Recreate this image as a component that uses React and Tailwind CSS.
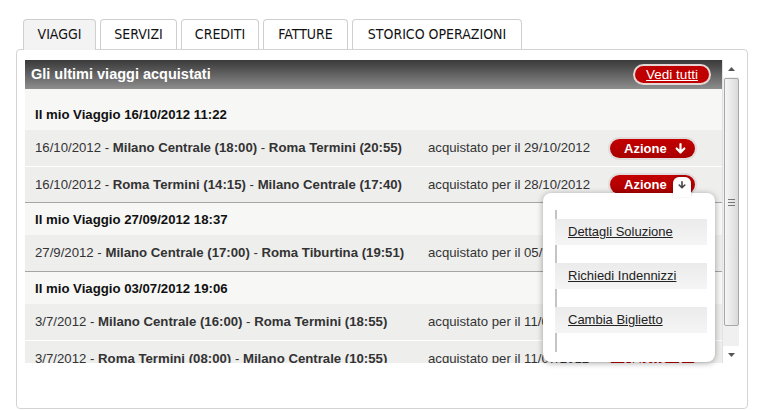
import React from "react";

const groups = [
  {
    title: "Il mio Viaggio 16/10/2012 11:22",
    rows: [
      ["16/10/2012", "Milano Centrale (18:00)", "Roma Termini (20:55)", "29/10/2012"],
      ["16/10/2012", "Roma Termini (14:15)", "Milano Centrale (17:40)", "28/10/2012"],
    ],
  },
  {
    title: "Il mio Viaggio 27/09/2012 18:37",
    rows: [["27/9/2012", "Milano Centrale (17:00)", "Roma Tiburtina (19:51)", "05/10/2012"]],
  },
  {
    title: "Il mio Viaggio 03/07/2012 19:06",
    rows: [
      ["3/7/2012", "Milano Centrale (16:00)", "Roma Termini (18:55)", "11/07/2012"],
      ["3/7/2012", "Roma Termini (08:00)", "Milano Centrale (10:55)", "11/07/2012"],
    ],
  },
];

const tabs = [
  { label: "VIAGGI", w: "w-[73px]", active: true },
  { label: "SERVIZI", w: "w-[77px]" },
  { label: "CREDITI", w: "w-[78px]" },
  { label: "FATTURE", w: "w-[85px]" },
  { label: "STORICO OPERAZIONI", w: "w-[170px]" },
];

function DownArrow({ color = "#fff", size = 11, sw = 2 }) {
  return (
    <svg width={size} height={size} viewBox="0 0 10 10">
      <path d="M5 1 V8.5 M1.5 5 L5 8.5 L8.5 5" stroke={color} strokeWidth={sw} fill="none" strokeLinecap="round" strokeLinejoin="round" />
    </svg>
  );
}

function Azione() {
  return (
    <div className="w-[89px] h-[23px] rounded-full bg-[#e2dcdc] p-[2px] shrink-0">
      <div className="w-full h-full rounded-full bg-gradient-to-b from-[#c40000] to-[#a80000] flex items-center pl-[14px] pr-[9px] justify-between">
        <span className="text-white font-bold text-[13px] leading-none">Azione</span>
        <DownArrow />
      </div>
    </div>
  );
}

function Row({ r, first }) {
  return (
    <div className={`flex items-center h-[36px] bg-[#eeeeed] pl-[10px] text-[13.2px] text-[#333] ${first ? "" : "border-t border-white"}`}>
      <div className="w-[393px] shrink-0 whitespace-nowrap">
        {r[0]} - <b className="font-bold">{r[1]}</b> - <b className="font-bold">{r[2]}</b>
      </div>
      <div className="w-[180px] shrink-0 whitespace-nowrap">acquistato per il {r[3]}</div>
      <Azione />
    </div>
  );
}

export default function App() {
  return (
    <div className="w-[762px] h-[410px] bg-white relative overflow-hidden" style={{ fontFamily: '"Liberation Sans", Arial, sans-serif' }}>
      <div className="pt-[19px]">
        <div className="flex gap-[4px] pl-[23px] relative z-10">
          {tabs.map((t) => (
            <div
              key={t.label}
              className={`${t.w} ${t.active ? "h-[31px] bg-[#f3f3f3]" : "h-[30px] bg-white"} border border-b-0 border-[#cfcfcf] rounded-t-[4px] flex items-center justify-center text-[14px] text-[#111] pb-[1px] whitespace-nowrap font-['DejaVu_Sans_Condensed','Liberation_Sans',sans-serif]`}
            >
              {t.label}
            </div>
          ))}
        </div>
        <div className="-mt-[1px] ml-[16px] w-[732px] h-[360px] border border-[#d4d4d4] rounded-[4px] pt-[10px] pl-[8px]">
          <div className="flex h-[303px] w-[714px]">
            <div className="w-[697px] flex flex-col overflow-hidden">
              <div className="h-[29px] shrink-0 bg-gradient-to-b from-[#3a3a3a] to-[#8e8e8e] flex items-center justify-between pl-[6px] pr-[11px]">
                <span className="text-white font-bold text-[14.5px]">Gli ultimi viaggi acquistati</span>
                <div className="w-[78px] h-[21px] rounded-full bg-[#e6d6d6] p-[2px]">
                  <div className="w-full h-full rounded-full bg-[#c00000] flex items-center justify-center">
                    <span className="text-white text-[13.5px] underline leading-none">Vedi tutti</span>
                  </div>
                </div>
              </div>
              <div className="flex-1 bg-[#f7f7f6] overflow-hidden pt-[9px]">
                {groups.map((g, gi) => (
                  <div key={gi} className={gi > 0 ? "border-t border-[#a5a5a5]" : ""}>
                    <div className="h-[32px] flex items-center pl-[10px] pt-[2px] text-[13.2px] font-bold text-[#111]">{g.title}</div>
                    {g.rows.map((r, ri) => (
                      <Row key={ri} r={r} first={ri === 0} />
                    ))}
                  </div>
                ))}
              </div>
            </div>
            <div className="w-[17px] h-[303px] bg-[#f0f0f0] border-l border-[#e2e2e2] flex flex-col items-center">
              <div className="h-[17px] w-full bg-white flex items-center justify-center">
                <svg width="7" height="4" viewBox="0 0 7 4"><path d="M0 4 L3.5 0 L7 4 Z" fill="#555" /></svg>
              </div>
              <div className="mt-[1px] w-[15px] h-[248px] border border-[#a8a8a8] rounded-[2px] bg-gradient-to-r from-[#f6f6f6] to-[#dadada] flex flex-col items-center justify-center gap-[2px]">
                <div className="w-[7px] h-px bg-[#777]" />
                <div className="w-[7px] h-px bg-[#777]" />
                <div className="w-[7px] h-px bg-[#777]" />
              </div>
              <div className="flex-1" />
              <div className="h-[17px] w-full bg-white flex items-center justify-center">
                <svg width="7" height="4" viewBox="0 0 7 4"><path d="M0 0 L3.5 4 L7 0 Z" fill="#555" /></svg>
              </div>
            </div>
          </div>
        </div>
      </div>

      <div className="absolute left-[543px] top-[193px] w-[172px] h-[169px] bg-white rounded-[8px] shadow-[0_1px_6px_rgba(0,0,0,0.35)]">
        <div className="absolute left-[12px] top-[17px] w-[2px] h-[142px] bg-[#c4c4c4]" />
        <div className="relative pt-[26px] pl-[12px] flex flex-col gap-[18px]">
          {["Dettagli Soluzione", "Richiedi Indennizzi", "Cambia Biglietto"].map((s) => (
            <div key={s} className="w-[152px] h-[26px] bg-gradient-to-b from-[#ebebeb] to-[#f5f5f5] flex items-center pl-[13px] text-[13px] text-[#222] underline">
              {s}
            </div>
          ))}
        </div>
      </div>
      <div className="absolute left-[673px] top-[177px] w-[18px] h-[20px] bg-white rounded-t-[6px] shadow-[0_-1px_3px_rgba(0,0,0,0.25)] flex items-start justify-center pt-[4px]">
        <DownArrow color="#444" size={8} sw={2} />
      </div>
    </div>
  );
}
